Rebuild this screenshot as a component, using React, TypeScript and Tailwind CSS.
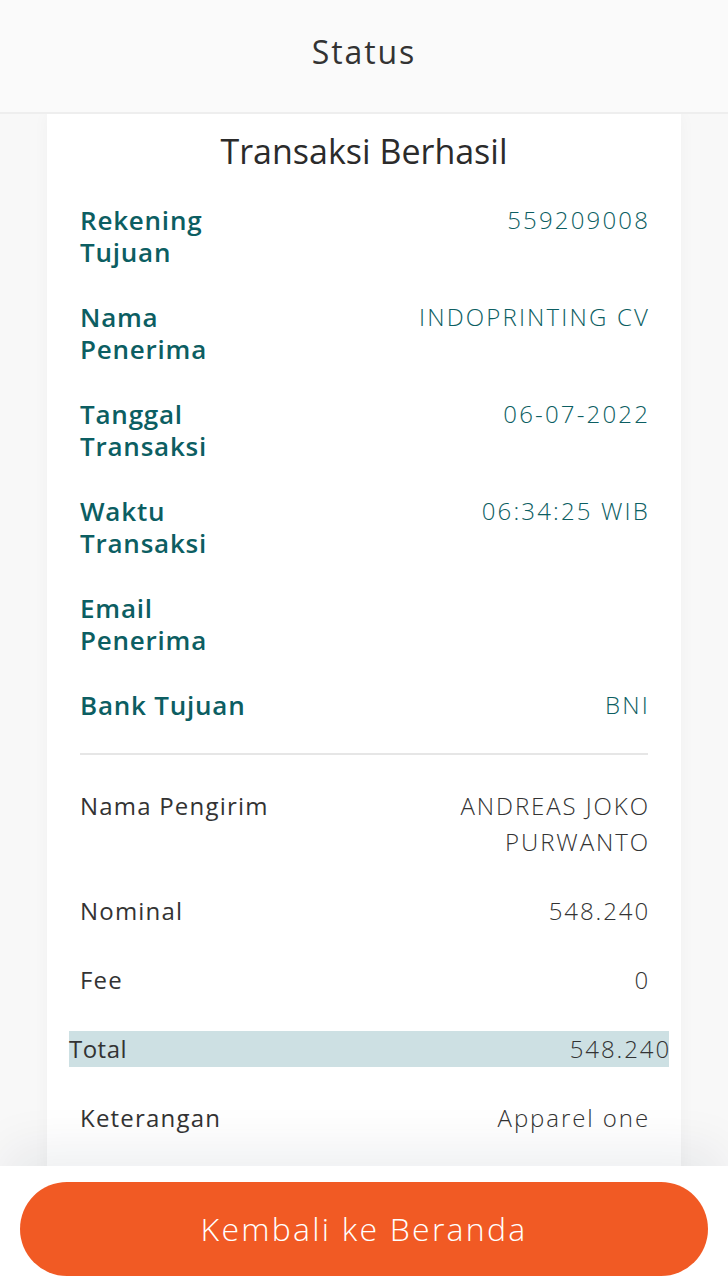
const rows = [
  { label: ['Rekening', 'Tujuan'], value: '559209008' },
  { label: ['Nama', 'Penerima'], value: 'INDOPRINTING CV' },
  { label: ['Tanggal', 'Transaksi'], value: '06-07-2022' },
  { label: ['Waktu', 'Transaksi'], value: '06:34:25 WIB' },
  { label: ['Email', 'Penerima'], value: '' },
  { label: ['Bank Tujuan'], value: 'BNI' },
];

function InfoRow({ label, value }: { label: string[]; value: string }) {
  return (
    <div className="flex items-start justify-between text-[#0c5e62] leading-[32px]">
      <div className="text-[26px] font-semibold tracking-[0.03em]">
        {label.map((l) => (
          <div key={l}>{l}</div>
        ))}
      </div>
      <div className="-mr-[2px] text-right text-[24px] font-light tracking-[0.09em]">{value}</div>
    </div>
  );
}

function SenderRow({ label, value }: { label: string; value: React.ReactNode }) {
  return (
    <div className="flex items-start justify-between leading-[36px] text-[#333333]">
      <div className="text-[24px] font-medium tracking-[0.05em]">{label}</div>
      <div className="-mr-[2px] text-right text-[24px] font-light tracking-[0.08em]">{value}</div>
    </div>
  );
}

export default function App(): React.JSX.Element {
  return (
    <div className="flex h-[1280px] flex-col bg-[#f8f8f8] font-['Open_Sans',sans-serif]">
      <header className="flex h-[114px] shrink-0 items-center justify-center border-b-2 border-[#eeeeee] bg-[#fafafa]">
        <h1 className="-mt-2 text-[32px] font-medium tracking-[0.06em] text-[#333333]">Status</h1>
      </header>

      <div className="flex-1 overflow-hidden px-[47px]">
        <div className="bg-white px-[33px] pt-[17px] pb-10 shadow-[0_0_16px_rgba(0,0,0,0.035)]">
          <h2 className="text-center text-[34px] leading-[40px] font-medium text-[#2b2b2b]">Transaksi Berhasil</h2>

          <div className="mt-[33px] flex flex-col gap-[33px]">
            {rows.map((r) => (
              <InfoRow key={r.label.join(' ')} label={r.label} value={r.value} />
            ))}
          </div>

          <div className="mt-[32px] h-[2px] bg-[#e6e6e6]" />

          <div className="mt-[33px] flex flex-col gap-[33px]">
            <SenderRow
              label="Nama Pengirim"
              value={
                <>
                  ANDREAS JOKO
                  <br />
                  PURWANTO
                </>
              }
            />
            <SenderRow label="Nominal" value="548.240" />
            <SenderRow label="Fee" value="0" />
            <div className="-ml-[11px] -mr-[21px] flex h-[36px] items-center justify-between bg-[#cde0e3] text-[24px] leading-[36px] text-[#333333]">
              <span className="font-medium tracking-[0.02em]">Total</span>
              <span className="-mr-[2px] font-light tracking-[0.08em]">548.240</span>
            </div>
            <SenderRow label="Keterangan" value="Apparel one" />
          </div>
        </div>
      </div>

      <div className="relative h-[114px] shrink-0 bg-white px-5 pt-4 shadow-[0_-24px_50px_-6px_rgba(20,30,60,0.07)]">
        <button className="flex h-[94px] w-full items-center justify-center rounded-full bg-[#f15a24] text-[32px] font-light tracking-[0.07em] text-white">
          Kembali ke Beranda
        </button>
      </div>
    </div>
  );
}
